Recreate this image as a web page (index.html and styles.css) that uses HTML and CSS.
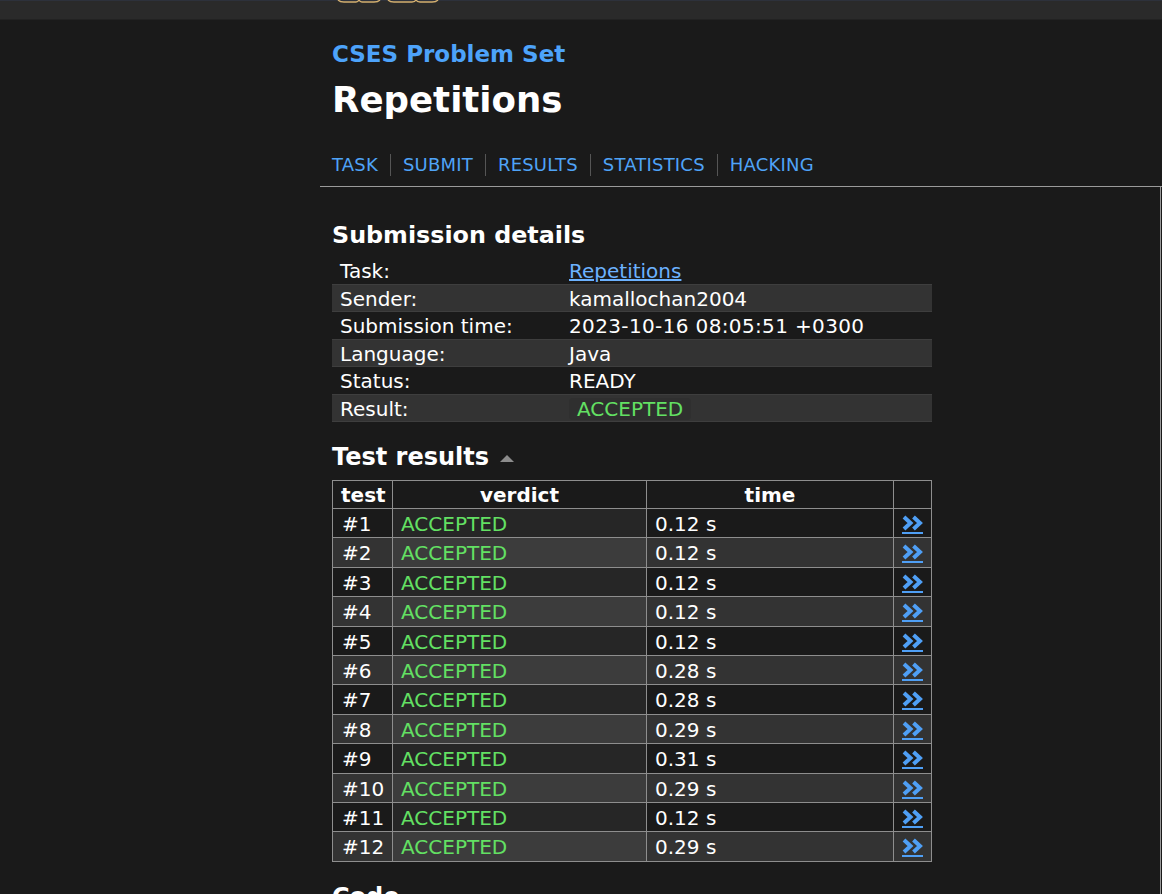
FILE: index.html
```html
<!DOCTYPE html>
<html>
<head>
<meta charset="utf-8">
<title>CSES - Repetitions - Results</title>
<link rel="stylesheet" href="styles.css">
</head>
<body>
<div class="topbar">
  <svg class="logo" width="110" height="4" viewBox="0 0 110 4">
    <path d="M2 0 Q4 2 8 2 L20 2 Q22 2 23 0 Q24 2 26 2 L38 2 Q42 2 44 0" fill="none" stroke="#d4b070" stroke-width="1.4"/>
    <path d="M52 0 Q54 2 58 2 L76 2 Q79 2 80 0 Q81 2 84 2 L96 2 Q100 2 102 0" fill="none" stroke="#d4b070" stroke-width="1.4"/>
  </svg>
</div>
<div class="header">
  <div class="site-title">CSES Problem Set</div>
  <h1 class="task-title">Repetitions</h1>
  <nav class="nav">
    <a class="nav-link" href="#">TASK</a>
    <a class="nav-link" href="#">SUBMIT</a>
    <a class="nav-link" href="#">RESULTS</a>
    <a class="nav-link" href="#">STATISTICS</a>
    <a class="nav-link" href="#">HACKING</a>
  </nav>
</div>
<div class="layout">
  <main class="content">
    <h2 class="section-title">Submission details</h2>
    <table class="details">
      <tr><td class="label">Task:</td><td><a class="task-link" href="#">Repetitions</a></td></tr>
      <tr><td class="label">Sender:</td><td>kamallochan2004</td></tr>
      <tr><td class="label">Submission time:</td><td class="stamp">2023-10-16 08:05:51 +0300</td></tr>
      <tr><td class="label">Language:</td><td>Java</td></tr>
      <tr><td class="label">Status:</td><td>READY</td></tr>
      <tr><td class="label">Result:</td><td><span class="badge">ACCEPTED</span></td></tr>
    </table>
    <h2 class="section-title tests-title">Test results <svg class="caret" width="16" height="9" viewBox="0 0 16 9"><polygon points="1,8 8,1 15,8" fill="#8c8c8c"/></svg></h2>
    <table class="tests">
      <thead>
        <tr><th class="c-test">test</th><th class="c-verdict">verdict</th><th class="c-time">time</th><th class="c-link"></th></tr>
      </thead>
      <tbody id="rows"></tbody>
    </table>
    <h2 class="section-title code-title">Code</h2>
  </main>
  <aside class="sidebar"></aside>
</div>
<script src="script.js"></script>
</body>
</html>
```

FILE: script.js
```js
var times = ["0.12","0.12","0.12","0.12","0.12","0.28","0.28","0.29","0.31","0.29","0.12","0.29"];
var body = document.getElementById("rows");
var html = "";
for (var i = 0; i < times.length; i++) {
  html += '<tr><td class="num">#' + (i + 1) + '</td>' +
    '<td class="verdict">ACCEPTED</td>' +
    '<td>' + times[i] + ' s</td>' +
    '<td class="link"><a class="more" href="#"><svg width="21" height="16" viewBox="0 0 21 16"><polyline points="2,2 8.5,8 2,14" fill="none" stroke="#4f9ff5" stroke-width="4" stroke-linejoin="miter"/><polyline points="11.5,2 18,8 11.5,14" fill="none" stroke="#4f9ff5" stroke-width="4" stroke-linejoin="miter"/></svg></a></td></tr>';
}
body.innerHTML = html;
```

FILE: styles.css
```css
html, body {
  margin: 0;
  padding: 0;
}
body {
  background: #1a1a1a;
  color: #ffffff;
  font-family: "DejaVu Sans", Verdana, sans-serif;
  font-size: 20px;
  overflow: hidden;
}
a {
  color: #4fa3f7;
  text-decoration: none;
}
.topbar {
  height: 18px;
  background: #2a2a2a;
  border-top: 1px solid #2d313b;
  border-bottom: 1px solid #222;
  position: relative;
}
.logo {
  position: absolute;
  left: 336px;
  top: -1px;
}
.header {
  margin-left: 320px;
  padding-top: 20px;
  border-bottom: 1px solid #9a9a9a;
}
.site-title {
  margin-left: 12px;
  font-size: 23px;
  line-height: 28px;
  font-weight: bold;
  color: #4da3fa;
}
.task-title {
  margin: 12px 0 0 12px;
  font-size: 35.6px;
  line-height: 40px;
  font-weight: bold;
}
.nav {
  display: flex;
  margin-left: 12px;
  padding: 34px 0 10px;
}
.nav-link {
  font-size: 18px;
  letter-spacing: 0.2px;
  line-height: 22px;
  padding: 0 12px;
  border-left: 1px solid #555;
}
.nav-link:first-child {
  padding-left: 0;
  border-left: none;
}
.layout {
  display: flex;
  margin-left: 320px;
}
.content {
  width: 828px;
  padding-left: 12px;
  border-right: 1px solid #9a9a9a;
  padding-top: 34px;
  min-height: 800px;
}
.sidebar {
  flex: 1;
}
.section-title {
  margin: 0;
  font-size: 24px;
  line-height: 28px;
  font-weight: bold;
}
.content > .section-title:first-child {
  font-size: 23.8px;
}
.details {
  margin-top: 8px;
  width: 600px;
  border-collapse: collapse;
}
.details td {
  padding: 3px 8px 1px;
  line-height: 22.5px;
  border-bottom: 1px solid #3e3e3e;
}
.details tr:nth-child(even) td {
  background: #333333;
}
.details .label {
  width: 213px;
}
.details .stamp {
  letter-spacing: 0.36px;
}
.task-link {
  color: #6cb2ff;
  text-decoration: underline;
}
.badge {
  display: inline-block;
  color: #63e063;
  background: #2f2f2f;
  border-radius: 4px;
  padding: 0 8px;
  line-height: 22px;
}
.tests-title {
  margin-top: 21px;
}
.caret {
  vertical-align: 2px;
  margin-left: 2px;
}
.tests {
  margin-top: 9px;
  width: 600px;
  border-collapse: collapse;
  table-layout: fixed;
}
.tests th, .tests td {
  border: 1px solid #8e8e8e;
  padding: 4px 8px 2px;
  line-height: 22.4px;
}
.tests th {
  font-weight: bold;
  padding: 3px 8px 1px;
  line-height: 23px;
  text-align: center;
}
.c-test { width: 43px; }
.c-verdict { width: 237px; }
.c-time { width: 230px; }
.c-link { width: 21px; }
.tests tbody tr:nth-child(even) td {
  background: #333333;
}
.tests td.num {
  padding-left: 9px;
}
.tests td.verdict {
  color: #63e063;
  background: #262626;
}
.tests tbody tr:nth-child(even) td.verdict {
  background: #3c3c3c;
}
.tests td.link {
  text-align: center;
  padding: 0;
}
.more {
  display: inline-block;
  border-bottom: 2px solid #4f9ff5;
  line-height: 0;
  padding-bottom: 1px;
  vertical-align: middle;
}
.code-title {
  margin-top: 21px;
}
```
